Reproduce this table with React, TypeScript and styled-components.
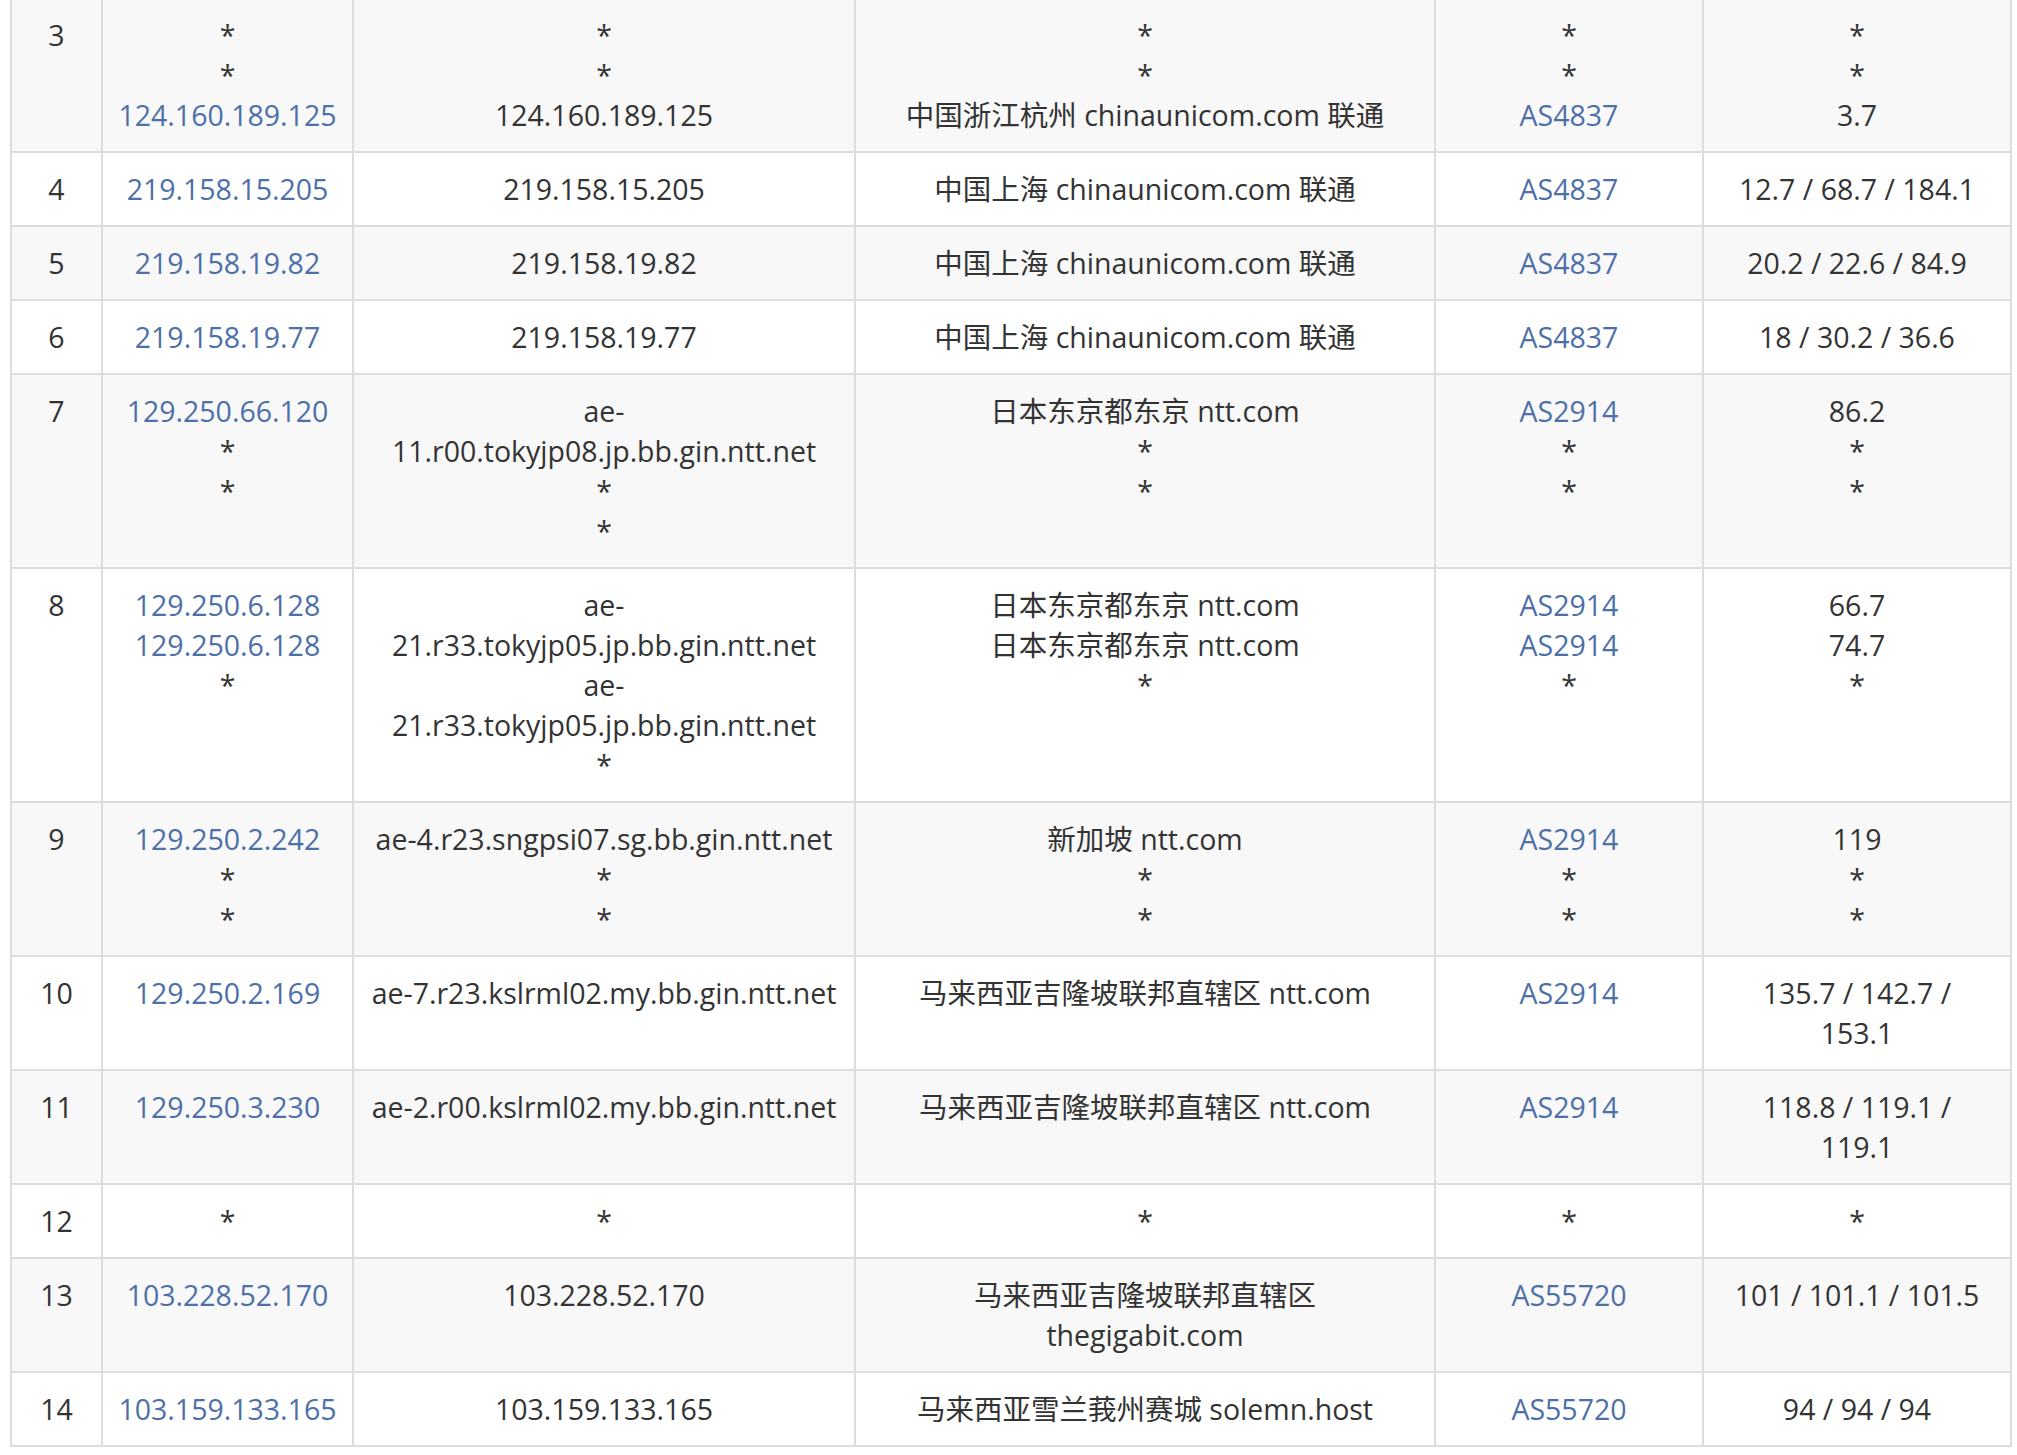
import React from "react";
import styled, { createGlobalStyle } from "styled-components";

const GlobalStyle = createGlobalStyle`
  html, body {
    margin: 0;
    padding: 0;
    background: #ffffff;
  }
  body {
    font-family: "Open Sans", "Noto Sans CJK SC", sans-serif;
    color: #333333;
    overflow: hidden;
  }
`;

const Page = styled.div`
  padding: 0 0 0 10px;
  margin-top: -3px;
`;

const Table = styled.table`
  width: 2000px;
  table-layout: fixed;
  border-collapse: collapse;
  font-size: 28.5px;
  line-height: 40px;
`;

const Row = styled.tr<{ $striped: boolean }>`
  background: ${(p) => (p.$striped ? "#f8f8f8" : "#ffffff")};
`;

const Cell = styled.td`
  border: 2px solid #dddddd;
  padding: 16px 8px;
  text-align: center;
  vertical-align: top;
  white-space: nowrap;
`;

const Line = styled.div`
  display: block;
`;

const Link = styled.a`
  color: #4d70a8;
  text-decoration: none;
`;

type Entry = string | { link: string };
type Hop = {
  n: number;
  ip: Entry[];
  host: Entry[];
  loc: Entry[];
  as: Entry[];
  time: Entry[];
};

const L = (s: string): Entry => ({ link: s });

const hops: Hop[] = [
  {
    n: 3,
    ip: ["*", "*", L("124.160.189.125")],
    host: ["*", "*", "124.160.189.125"],
    loc: ["*", "*", "中国浙江杭州 chinaunicom.com 联通"],
    as: ["*", "*", L("AS4837")],
    time: ["*", "*", "3.7"],
  },
  {
    n: 4,
    ip: [L("219.158.15.205")],
    host: ["219.158.15.205"],
    loc: ["中国上海 chinaunicom.com 联通"],
    as: [L("AS4837")],
    time: ["12.7 / 68.7 / 184.1"],
  },
  {
    n: 5,
    ip: [L("219.158.19.82")],
    host: ["219.158.19.82"],
    loc: ["中国上海 chinaunicom.com 联通"],
    as: [L("AS4837")],
    time: ["20.2 / 22.6 / 84.9"],
  },
  {
    n: 6,
    ip: [L("219.158.19.77")],
    host: ["219.158.19.77"],
    loc: ["中国上海 chinaunicom.com 联通"],
    as: [L("AS4837")],
    time: ["18 / 30.2 / 36.6"],
  },
  {
    n: 7,
    ip: [L("129.250.66.120"), "*", "*"],
    host: ["ae-", "11.r00.tokyjp08.jp.bb.gin.ntt.net", "*", "*"],
    loc: ["日本东京都东京 ntt.com", "*", "*"],
    as: [L("AS2914"), "*", "*"],
    time: ["86.2", "*", "*"],
  },
  {
    n: 8,
    ip: [L("129.250.6.128"), L("129.250.6.128"), "*"],
    host: [
      "ae-",
      "21.r33.tokyjp05.jp.bb.gin.ntt.net",
      "ae-",
      "21.r33.tokyjp05.jp.bb.gin.ntt.net",
      "*",
    ],
    loc: ["日本东京都东京 ntt.com", "日本东京都东京 ntt.com", "*"],
    as: [L("AS2914"), L("AS2914"), "*"],
    time: ["66.7", "74.7", "*"],
  },
  {
    n: 9,
    ip: [L("129.250.2.242"), "*", "*"],
    host: ["ae-4.r23.sngpsi07.sg.bb.gin.ntt.net", "*", "*"],
    loc: ["新加坡 ntt.com", "*", "*"],
    as: [L("AS2914"), "*", "*"],
    time: ["119", "*", "*"],
  },
  {
    n: 10,
    ip: [L("129.250.2.169")],
    host: ["ae-7.r23.kslrml02.my.bb.gin.ntt.net"],
    loc: ["马来西亚吉隆坡联邦直辖区 ntt.com"],
    as: [L("AS2914")],
    time: ["135.7 / 142.7 /", "153.1"],
  },
  {
    n: 11,
    ip: [L("129.250.3.230")],
    host: ["ae-2.r00.kslrml02.my.bb.gin.ntt.net"],
    loc: ["马来西亚吉隆坡联邦直辖区 ntt.com"],
    as: [L("AS2914")],
    time: ["118.8 / 119.1 /", "119.1"],
  },
  {
    n: 12,
    ip: ["*"],
    host: ["*"],
    loc: ["*"],
    as: ["*"],
    time: ["*"],
  },
  {
    n: 13,
    ip: [L("103.228.52.170")],
    host: ["103.228.52.170"],
    loc: ["马来西亚吉隆坡联邦直辖区", "thegigabit.com"],
    as: [L("AS55720")],
    time: ["101 / 101.1 / 101.5"],
  },
  {
    n: 14,
    ip: [L("103.159.133.165")],
    host: ["103.159.133.165"],
    loc: ["马来西亚雪兰莪州赛城 solemn.host"],
    as: [L("AS55720")],
    time: ["94 / 94 / 94"],
  },
];

const Lines: React.FC<{ items: Entry[] }> = ({ items }) => (
  <>
    {items.map((it, i) => (
      <Line key={i}>
        {typeof it === "string" ? it : <Link href="#">{it.link}</Link>}
      </Line>
    ))}
  </>
);

const widths = [91, 251, 502, 580, 268, 308];

export default function App() {
  return (
    <>
      <GlobalStyle />
      <Page>
        <Table>
          <colgroup>
            {widths.map((w, i) => (
              <col key={i} style={{ width: w }} />
            ))}
          </colgroup>
          <tbody>
            {hops.map((h, i) => (
              <Row key={h.n} $striped={i % 2 === 0}>
                <Cell>{h.n}</Cell>
                <Cell>
                  <Lines items={h.ip} />
                </Cell>
                <Cell>
                  <Lines items={h.host} />
                </Cell>
                <Cell>
                  <Lines items={h.loc} />
                </Cell>
                <Cell>
                  <Lines items={h.as} />
                </Cell>
                <Cell>
                  <Lines items={h.time} />
                </Cell>
              </Row>
            ))}
          </tbody>
        </Table>
      </Page>
    </>
  );
}
